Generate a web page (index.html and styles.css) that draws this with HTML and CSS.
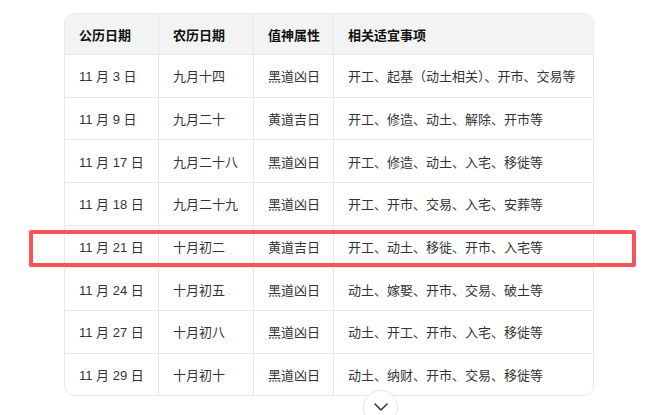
FILE: index.html
```html
<!DOCTYPE html>
<html lang="zh-CN">
<head>
<meta charset="utf-8">
<title>黄道吉日</title>
<link rel="stylesheet" href="styles.css">
</head>
<body>
<div class="page">
  <div class="table">
    <div class="row head">
      <div class="cell">公历日期</div>
      <div class="cell">农历日期</div>
      <div class="cell">值神属性</div>
      <div class="cell">相关适宜事项</div>
    </div>
    <div class="row">
      <div class="cell">11 月 3 日</div>
      <div class="cell">九月十四</div>
      <div class="cell">黑道凶日</div>
      <div class="cell">开工、起基（动土相关）、开市、交易等</div>
    </div>
    <div class="row">
      <div class="cell">11 月 9 日</div>
      <div class="cell">九月二十</div>
      <div class="cell">黄道吉日</div>
      <div class="cell">开工、修造、动土、解除、开市等</div>
    </div>
    <div class="row">
      <div class="cell">11 月 17 日</div>
      <div class="cell">九月二十八</div>
      <div class="cell">黑道凶日</div>
      <div class="cell">开工、修造、动土、入宅、移徙等</div>
    </div>
    <div class="row">
      <div class="cell">11 月 18 日</div>
      <div class="cell">九月二十九</div>
      <div class="cell">黑道凶日</div>
      <div class="cell">开工、开市、交易、入宅、安葬等</div>
    </div>
    <div class="row">
      <div class="cell">11 月 21 日</div>
      <div class="cell">十月初二</div>
      <div class="cell">黄道吉日</div>
      <div class="cell">开工、动土、移徙、开市、入宅等</div>
    </div>
    <div class="row">
      <div class="cell">11 月 24 日</div>
      <div class="cell">十月初五</div>
      <div class="cell">黑道凶日</div>
      <div class="cell">动土、嫁娶、开市、交易、破土等</div>
    </div>
    <div class="row">
      <div class="cell">11 月 27 日</div>
      <div class="cell">十月初八</div>
      <div class="cell">黑道凶日</div>
      <div class="cell">动土、开工、开市、入宅、移徙等</div>
    </div>
    <div class="row last">
      <div class="cell">11 月 29 日</div>
      <div class="cell">十月初十</div>
      <div class="cell">黑道凶日</div>
      <div class="cell">动土、纳财、开市、交易、移徙等</div>
    </div>
  </div>
  <div class="highlight"></div>
  <button class="more" aria-label="展开">
    <svg width="14" height="8" viewBox="0 0 14 8"><path d="M1 1 L7 7 L13 1" fill="none" stroke="#333" stroke-width="1.5" stroke-linecap="round" stroke-linejoin="round"/></svg>
  </button>
</div>
</body>
</html>
```
FILE: styles.css
```css
html, body {
  margin: 0;
  padding: 0;
  background: #fff;
  overflow: hidden;
}
body {
  font-family: "Liberation Sans", "Noto Sans CJK SC", sans-serif;
  font-size: 13px;
  color: #333;
}
.page {
  position: relative;
  width: 672px;
  height: 415px;
  padding: 13px 0 0 64px;
  box-sizing: border-box;
}
.table {
  width: 530px;
  box-sizing: border-box;
  border: 1px solid #e8e8e8;
  border-radius: 10px;
  overflow: hidden;
}
.row {
  display: grid;
  grid-template-columns: 94px 95px 80px 1fr;
  height: 42.67px;
  box-sizing: border-box;
  border-bottom: 1px solid #e8e8e8;
}
.row.last {
  border-bottom: none;
  height: 41.3px;
}
.row.head {
  height: 41px;
  background: #f3f3f3;
  font-weight: bold;
  color: #111;
}
.cell {
  display: flex;
  align-items: center;
  padding-left: 14px;
  border-right: 1px solid #e8e8e8;
  white-space: nowrap;
}
.cell:last-child {
  border-right: none;
}
.highlight {
  position: absolute;
  left: 29px;
  top: 230px;
  width: 607px;
  height: 37px;
  box-sizing: border-box;
  border: 4px solid #f65456;
  border-radius: 2px;
}
.more {
  position: absolute;
  left: 363px;
  top: 390px;
  width: 35px;
  height: 35px;
  padding: 0;
  border: 1px solid #e6e6e6;
  border-radius: 50%;
  background: #fff;
  display: flex;
  align-items: center;
  justify-content: center;
  padding-bottom: 2px;
}
```
